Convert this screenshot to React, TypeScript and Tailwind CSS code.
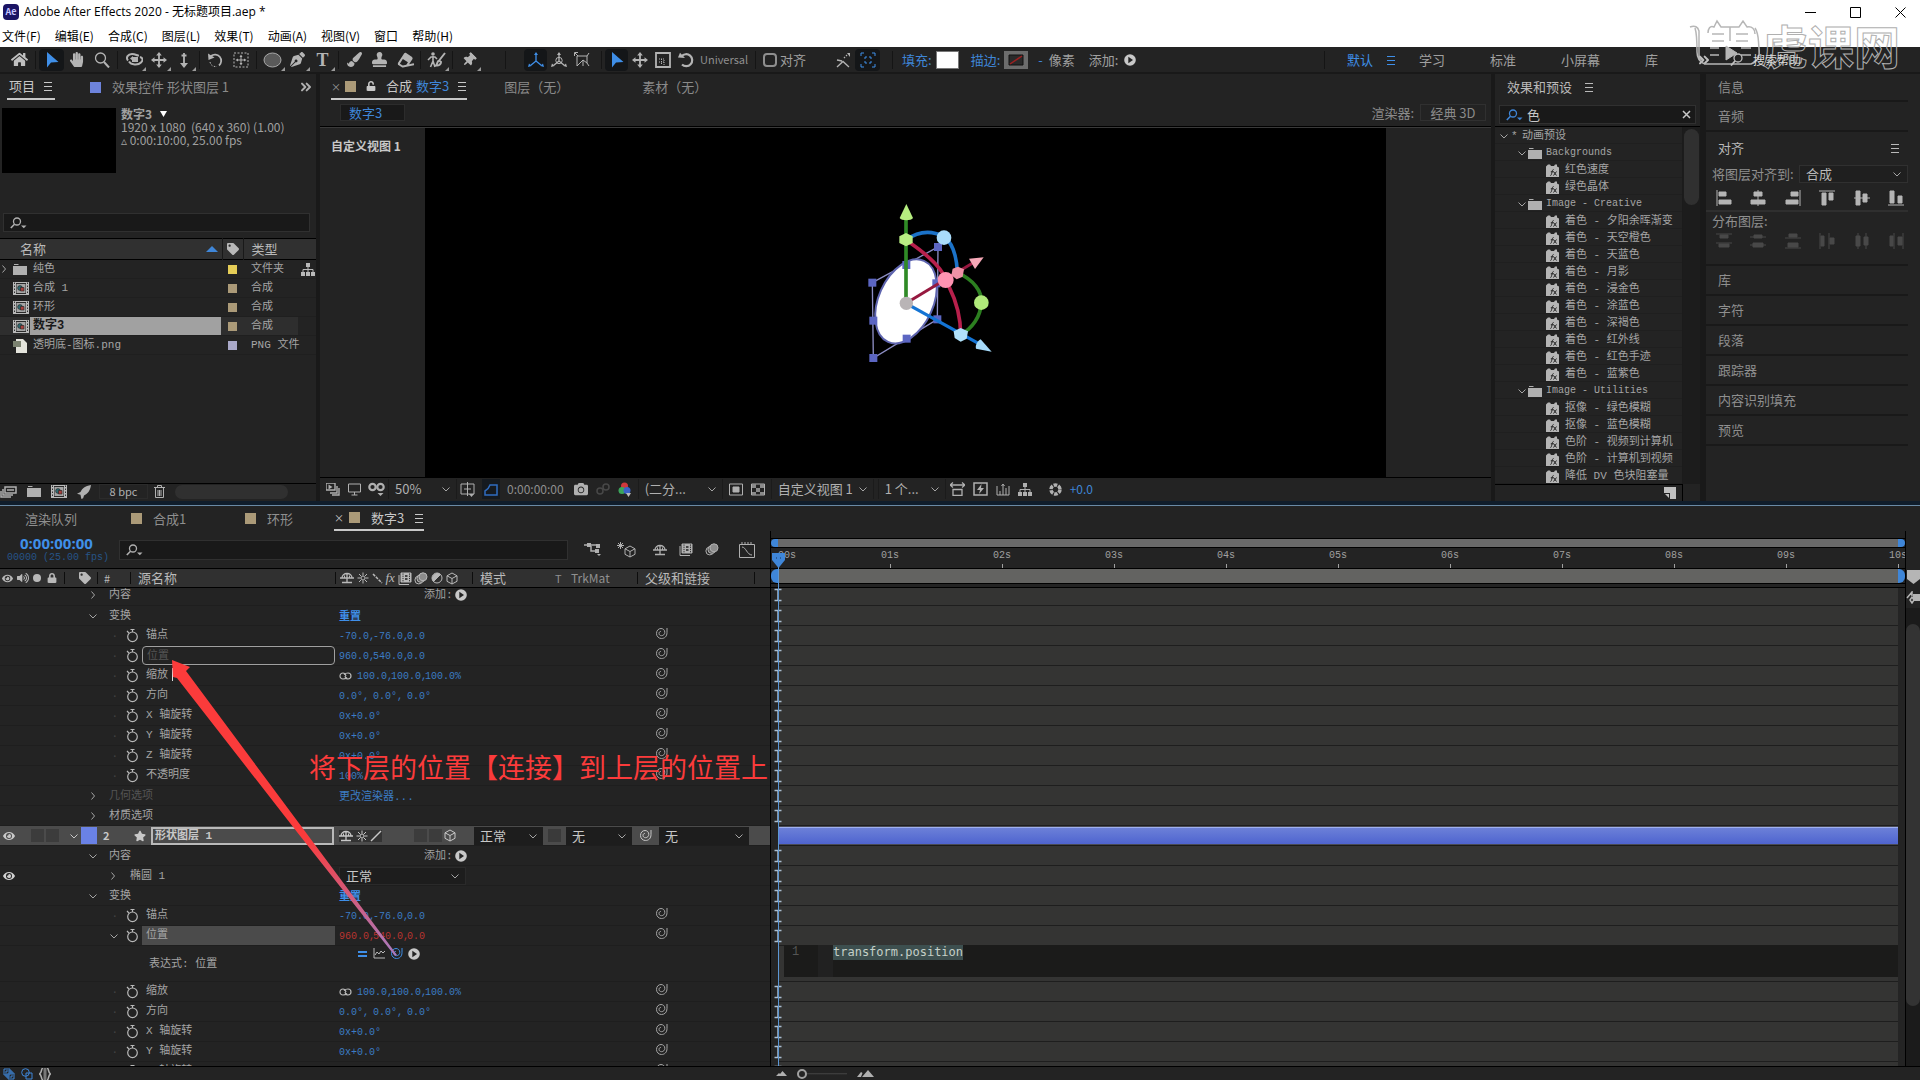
import type { ReactNode } from "react";
import { ChevronsRight } from "lucide-react";
import {
  FaCamera,
  FaEraser,
  FaEye,
  FaHandPaper,
  FaHome,
  FaLock,
  FaPaintBrush,
  FaPenNib,
  FaStamp,
  FaStar,
  FaTag,
  FaThumbtack,
  FaUnlock,
  FaVolumeUp,
} from "react-icons/fa";

const mono =
  "[font-family:'Liberation_Mono','Noto_Sans_CJK_SC',monospace]";

type SvgProps = {
  w?: number;
  h?: number;
  box?: string;
  className?: string;
  children: ReactNode;
};

const Svg = ({ w = 16, h = 16, box = "0 0 16 16", className, children }: SvgProps) => (
  <svg
    width={w}
    height={h}
    viewBox={box}
    fill="none"
    stroke="currentColor"
    className={`shrink-0 ${className ?? ""}`}
    aria-hidden="true"
  >
    {children}
  </svg>
);

/* ---------- icons ---------- */

const MenuLines = ({ className }: { className?: string }) => (
  <Svg w={10} h={10} box="0 0 10 10" className={className}>
    <path d="M1 1.500h8M1 5.500h8M1 9.500h8" />
  </Svg>
);

const ChevronDown = ({ className }: { className?: string }) => (
  <Svg w={8} h={8} box="0 0 8 8" className={className}>
    <path d="M.5 2.500 4 6l3.500-3.500" />
  </Svg>
);

const ChevronRight = () => (
  <Svg w={8} h={8} box="0 0 8 8">
    <path d="M2.500.5 5.500 4l-3 3.500" />
  </Svg>
);

const SearchIcon = ({ className }: { className?: string }) => (
  <Svg w={17} h={12} box="0 0 17 12" className={className}>
    <circle cx="7" cy="4.500" r="3.500" strokeWidth="1.300" />
    <path d="M4.500 7.200.8 11" strokeWidth="1.600" />
    <path d="M11 8.500h5.500l-2.700 2.800z" fill="currentColor" stroke="none" />
  </Svg>
);

const Cursor = () => (
  <Svg>
    <path d="M3 0v15.500l4-5L14.500 10z" fill="currentColor" stroke="none" />
  </Svg>
);

const Move = () => (
  <Svg>
    <path d="M8 2.500v11M2.500 8h11" strokeWidth="1.800" />
    <path d="M8 0l2.800 3.500H5.200zM8 16l2.800-3.500H5.200zM0 8l3.500-2.800v5.600zM16 8l-3.500-2.800v5.600z" fill="currentColor" stroke="none" />
  </Svg>
);

const RotateIcon = () => (
  <Svg>
    <path d="M3.500 4.500A6 6 0 1 1 4 12.500" strokeWidth="2.200" />
    <path d="M0 5.500 7 6 2 .8z" fill="currentColor" stroke="none" />
  </Svg>
);

const CompIcon = () => (
  <Svg w={16} h={13} box="0 0 16 13">
    <path d="M0 0h16v13H0z" fill="#b9b9b9" stroke="none" />
    <path d="M3 1h10v11H3z" fill="#2a2a2a" stroke="none" />
    <path d="M3.500 2h9v9h-9z" fill="#a5a5a5" stroke="none" />
    <circle cx="7" cy="6" r="2.400" fill="#2f6a72" stroke="#222" strokeWidth=".6" />
    <path d="M7.500 5.500h3.500v3.500H7.500z" fill="#a8403c" stroke="#222" strokeWidth=".6" />
    <path d="M1.500.5v12M14.500.5v12" stroke="#333" strokeDasharray="1.500 1.500" />
  </Svg>
);

const FolderIcon = () => (
  <Svg w={14} h={11} box="0 0 14 11" className="text-[#b0b0b0]">
    <path d="M0 2h14v9H0zM1 0h4l1 1H1z" fill="currentColor" stroke="none" />
  </Svg>
);

const PresetIcon = () => (
  <Svg w={13} h={13} box="0 0 13 13" className="text-[#b5b5b5]">
    <path d="M0 2.500 2 .5h2l1 1.500h3L9 .5h2v2l2 1V13H0z" fill="currentColor" stroke="none" />
    <path d="M4.500 11.500c1.500 0 1.200-6 3-6M4.800 7.800h2.700M7.500 7.500l3 4M10.500 7.500l-3 4" stroke="#222" />
  </Svg>
);

const PlayCircle = () => (
  <Svg w={12} h={12} box="0 0 12 12">
    <circle cx="6" cy="6" r="5.800" fill="#c8c8c8" stroke="none" />
    <path d="M4.300 2.800 9 6 4.300 9.200z" fill="#232323" stroke="none" />
  </Svg>
);

const Whip = ({ className }: { className?: string }) => (
  <Svg w={13} h={13} box="0 0 13 13" className={className}>
    <path d="M12 1v4.500c0 4-2.500 6-5.500 6a5 5 0 0 1-5-5C1.500 3.500 3.500 1.500 6 1.500c2.300 0 3.800 1.700 3.800 3.800 0 2-1.500 3.400-3.300 3.400-1.500 0-2.500-1-2.500-2.300 0-1.200.9-2 2-2" />
  </Svg>
);

const Stopwatch = () => (
  <Svg w={13} h={15} box="0 0 13 15" className="text-[#b9b9b9]">
    <circle cx="6.500" cy="8.800" r="4.800" strokeWidth="1.200" />
    <path d="M4.500 1.500h4M6.500 1.500v2.500M2.800 5 1 2.800" strokeWidth="1.200" />
  </Svg>
);

const ShyIcon = () => (
  <Svg w={14} h={12} box="0 0 14 12">
    <path d="M2 6a5 4.500 0 0 1 10 0M0 6h14M7 1.500V11M2 10.500h10" strokeWidth="1.300" />
    <path d="M4.500 3.500v2.500M9.500 3.500v2.500" />
  </Svg>
);

const SunIcon = () => (
  <Svg w={12} h={12} box="0 0 12 12">
    <circle cx="6" cy="6" r="2" />
    <path d="M6 .5v3M6 8.500v3M.5 6h3M8.500 6h3M2 2l2 2M8 8l2 2M10 2 8 4M4 8l-2 2" />
  </Svg>
);

const FilmIcon = () => (
  <Svg w={14} h={13} box="0 0 14 13">
    <path d="M3 1h10v9H3z" fill="currentColor" />
    <path d="M1 3v9.500h10" />
    <path d="M5 1.500v8M11.500 1.500v8" stroke="#2b2b2b" strokeDasharray="1.200 1" />
    <path d="M7 3h2.500v2H7zM7 6h2.500v2H7z" fill="#444" stroke="none" />
  </Svg>
);

const BlurIcon = () => (
  <Svg w={14} h={13} box="0 0 14 13">
    <circle cx="4.800" cy="8" r="3.900" />
    <circle cx="6.800" cy="6.500" r="3.900" fill="#666" />
    <circle cx="9" cy="4.800" r="4" fill="#8c8c8c" />
  </Svg>
);

const AdjustIcon = () => (
  <Svg w={12} h={12} box="0 0 12 12">
    <circle cx="6" cy="6" r="5" />
    <path d="M2.500 9.500 9.500 2.500A5 5 0 0 0 2.500 9.500z" fill="currentColor" />
  </Svg>
);

const CubeIcon = () => (
  <Svg w={12} h={13} box="0 0 12 13">
    <path d="M6 1l5 2.800v5.500L6 12 1 9.300V3.800zM1 3.800 6 6.500l5-2.700M6 6.500V12" />
  </Svg>
);

const Sitemap = () => (
  <Svg w={14} h={13} box="0 0 14 13">
    <path d="M5 0h4v4H5zM0 9h4v4H0zM5 9h4v4H5zM10 9h4v4h-4z" fill="currentColor" stroke="none" />
    <path d="M7 4v5M2 9V6.500h10V9" />
  </Svg>
);

const LinkIcon = () => (
  <Svg w={13} h={8} box="0 0 13 8" className="text-[#b9b9b9]">
    <path d="M8 5.500c-1 1-2 1.500-4 1.500-1.800 0-3-1.200-3-3s1.200-3 3-3 2.500 1 3 3M5 2.500C6 1.500 7 1 9 1c1.800 0 3 1.200 3 3s-1.200 3-3 3-2.500-1-3-3" strokeWidth="1.200" />
  </Svg>
);

/* ---------- small parts ---------- */

const Sep = () => <span className="mx-[3px] h-[18px] w-px shrink-0 bg-[#151515]" />;

type ToolProps = { label: string; active?: boolean; narrow?: boolean; corner?: boolean; children: ReactNode };

const Tool = ({ label, active, narrow, corner, children }: ToolProps) => (
  <button
    type="button"
    aria-label={label}
    className={`relative flex h-[22px] shrink-0 items-center justify-center ${narrow ? "w-[23px]" : "w-[25px]"} ${
      active ? "rounded-sm bg-[#141618] text-[#3f8fe8]" : "text-[#b4b4b4]"
    }`}
  >
    {children}
    {corner && (
      <span className="absolute right-0 bottom-0 border-b-4 border-l-4 border-b-[#9a9a9a] border-l-transparent" />
    )}
  </button>
);

type DropProps = { label: string; value: string; className: string };

const Drop = ({ label, value, className }: DropProps) => (
  <div className={`relative shrink-0 ${className}`}>
    <select
      aria-label={label}
      className="block h-full w-full appearance-none bg-transparent pl-1.5 text-[13px] leading-4 outline-none"
    >
      <option>{value}</option>
    </select>
    <ChevronDown className="pointer-events-none absolute top-1/2 right-1.5 -translate-y-1/2 text-[#a5a5a5]" />
  </div>
);

const Swatch = ({ className }: { className: string }) => (
  <span className={`inline-block size-[11px] shrink-0 ${className}`} />
);

/* ---------- window chrome ---------- */

const menus = ["文件(F)", "编辑(E)", "合成(C)", "图层(L)", "效果(T)", "动画(A)", "视图(V)", "窗口", "帮助(H)"];

const TitleBar = () => (
  <header className="relative bg-white text-black">
    <div className="flex h-6 items-center pl-[3px] text-[12px]">
      <span className="mr-[5px] flex h-4 w-4 items-center justify-center rounded-sm bg-[#1b1464] text-[9px] font-bold text-[#c5c5ff]">
        Ae
      </span>
      <h1 className="[font-family:'Open_Sans','Noto_Sans_CJK_SC',sans-serif]">
        Adobe After Effects 2020 - 无标题项目.aep *
      </h1>
      <div className="ml-auto flex items-center gap-[34px] pr-[14px]">
        <button type="button" aria-label="最小化">
          <Svg w={11} h={11} box="0 0 11 11"><path d="M0 5.500h11" /></Svg>
        </button>
        <button type="button" aria-label="最大化">
          <Svg w={11} h={11} box="0 0 11 11"><path d="M.5.5h10v10H.5z" /></Svg>
        </button>
        <button type="button" aria-label="关闭">
          <Svg w={11} h={11} box="0 0 11 11"><path d="m.5.5 10 10M10.500.5l-10 10" /></Svg>
        </button>
      </div>
    </div>
    <nav className="flex h-[23px] items-center gap-[14px] pl-0.5 text-[12px]">
      {menus.map((m) => (
        <button type="button" key={m}>{m}</button>
      ))}
    </nav>
    <Watermark />
  </header>
);

const Watermark = () => (
  <div className="pointer-events-none absolute top-[19px] right-[20px] z-20 flex h-[50px] items-center">
    <Svg w={74} h={50} box="0 0 74 50" className="text-[#b7b7b7]">
      <path d="M2 8c5-2 8 0 9 4v24c0 3 2 5 5 5M7 9c2 6 2 14 2 24 0 6 2 10 8 12h46c6-2 9-8 8-16-1-9 0-14-4-20" strokeWidth="1.500" />
      <path d="M20 14c0-4 2-8 6-6l3-6 4 6h18l4-6 4 6c5-1 8 2 8 7M24 15h12M48 15h12M24 22h12M48 22h12M22 29h9M53 29h10M22 36h9M53 36h10M42 8v14" strokeWidth="1.500" />
      <path d="m38 27 11 7-11 7z" fill="currentColor" />
    </Svg>
    <span className="text-[46px] leading-[50px] font-bold text-transparent [-webkit-text-stroke:1px_#b0b0b0]">
      虎课网
    </span>
  </div>
);

const Toolbar = () => (
  <div className="flex h-[27px] items-center border-b-2 border-[#191919] bg-[#232323] text-[13px] text-[#a0a0a0]">
    <div className="flex w-8 shrink-0 items-center justify-center pl-1.5 text-[#c0c0c0]">
      <FaHome size={17} />
    </div>
    <Sep />
    <Tool label="选取工具" active><Cursor /></Tool>
    <Tool label="手形工具"><FaHandPaper size={15} /></Tool>
    <Tool label="缩放工具">
      <Svg><circle cx="6.500" cy="6" r="5" strokeWidth="1.300" /><path d="m10 10 5 5.500" strokeWidth="2" /></Svg>
    </Tool>
    <Sep />
    <Tool label="统一摄像机工具" corner>
      <Svg w={18} box="0 0 18 16">
        <path d="M3 8.500C.5 5.500 3 2 7 2s5 2 7 1.500M4 9.500c2 3.500 9 4 12 1s1-5-1-5.500" strokeWidth="2" />
        <path d="M7 5h6v5H7zM5 6.500 8 4v5z" fill="currentColor" stroke="none" />
      </Svg>
    </Tool>
    <Tool label="跟踪 XY 摄像机工具" corner><Move /></Tool>
    <Tool label="跟踪 Z 摄像机工具" corner>
      <Svg><path d="M8 1v11M5.500 3.500h5" strokeWidth="1.800" /><path d="M8 16l4-5H4z" fill="currentColor" stroke="none" /></Svg>
    </Tool>
    <Sep />
    <Tool label="旋转工具">
      <Svg>
        <path d="M3 4a6 6 0 0 1 8 9.500" strokeWidth="1.800" />
        <path d="M0 1.500 6.500 5.500.5 8z" fill="currentColor" stroke="none" />
        <path d="M2 10c.5 3 3 5 7 4.500" strokeDasharray="1.500 1.500" />
      </Svg>
    </Tool>
    <Tool label="向后平移工具">
      <Svg>
        <path d="M1 1h14v14H1z" strokeDasharray="2 1.500" />
        <path d="M8 4v8M4 8h8" />
        <path d="M8 2.500 9.500 5h-3zM8 13.500 9.500 11h-3zM2.500 8 5 6.500v3zM13.500 8 11 6.500v3z" fill="currentColor" stroke="none" />
      </Svg>
    </Tool>
    <Sep />
    <Tool label="椭圆工具" corner>
      <Svg w={19} box="0 0 19 16"><ellipse cx="9.500" cy="8" rx="8.500" ry="7" fill="#5a5a5a" stroke="#a8a8a8" /></Svg>
    </Tool>
    <Tool label="钢笔工具" corner><FaPenNib size={15} /></Tool>
    <Tool label="横排文字工具" corner>
      <span className="text-[18px] leading-4 font-bold [font-family:'Liberation_Serif',serif]">T</span>
    </Tool>
    <Sep />
    <Tool label="画笔工具"><FaPaintBrush size={15} /></Tool>
    <Tool label="仿制图章工具"><FaStamp size={15} /></Tool>
    <Tool label="橡皮擦工具"><FaEraser size={16} className="-rotate-12" /></Tool>
    <Sep />
    <Tool label="Roto 笔刷工具" corner>
      <Svg w={19} box="0 0 19 16">
        <circle cx="6" cy="2" r="1.800" fill="currentColor" stroke="none" />
        <path d="M6 4v5l-2.500 6M6 9l2 6M1 8l3-3h4l2 2" strokeWidth="1.600" />
        <path d="M18 1 12.500 8M12 8.500c-2 .5-1 3-3 5 3 .5 5-1.500 5-3.500z" strokeWidth="2" />
      </Svg>
    </Tool>
    <Sep />
    <Tool label="人偶位置控点工具" corner><FaThumbtack size={14} className="rotate-45" /></Tool>
    <span className="w-[21px]" />
    <Sep />
    <span className="w-[15px]" />
    <Tool label="本地轴模式" active narrow>
      <Svg><path d="M8 9V1.500M8 9l-5.500 4.500M8 9l5.500 4.500" strokeWidth="1.300" /><path d="M8 0l2 3H6zM0 15l1-3.500L3.500 14zM16 15l-1-3.500L12.500 14z" fill="currentColor" stroke="none" /></Svg>
    </Tool>
    <Tool label="世界轴模式" narrow>
      <Svg><circle cx="8" cy="8.500" r="3.200" /><path d="M8 9V1.500M8 9l-5.500 4.500M8 9l5.500 4.500" strokeWidth="1.300" /><path d="M8 0l2 3H6zM0 15l1-3.500L3.500 14zM16 15l-1-3.500L12.500 14z" fill="currentColor" stroke="none" /></Svg>
    </Tool>
    <Tool label="视图轴模式" narrow>
      <Svg><path d="M3 4h10v7L9 8 3 14zM1 1l3 3M4 .5H.5V4M15 1l-2 3M13 11l2 3M9 8v6" /></Svg>
    </Tool>
    <span className="w-[5px]" />
    <Sep />
    <Tool label="通用" active narrow><Cursor /></Tool>
    <Tool label="位置" narrow><Move /></Tool>
    <Tool label="缩放" narrow>
      <Svg><path d="M1 1h14v14H1z" strokeWidth="1.800" /><path d="M4 7h5v6M4 10h5M6.500 7v6" strokeDasharray="1 1" /></Svg>
    </Tool>
    <Tool label="旋转" narrow><RotateIcon /></Tool>
    <span className="ml-[3px] w-[52px] text-[11px] text-[#8f8f8f]">Universal</span>
    <Sep />
    <label className="ml-1 flex items-center gap-[3px]">
      <input type="checkbox" className="size-[14px] appearance-none rounded-sm border-2 border-[#8f8f8f]" />
      对齐
    </label>
    <span className="w-[24px]" />
    <Tool label="对齐边缘">
      <Svg><path d="M2 15l6-5.500L14 15M2 8l5 1M9 6l1-1M11 4l1-1" strokeWidth="1.300" /><path d="M12 1h3v4z" fill="currentColor" stroke="none" /></Svg>
    </Tool>
    <Tool label="对齐特性" active>
      <Svg><path d="M1 4V1h3M12 1h3v3M15 12v3h-3M4 15H1v-3M5 7V5h2M9 5h2v2M11 9v2H9M7 11H5V9" /></Svg>
    </Tool>
    <span className="w-[9px]" />
    <Sep />
    <button type="button" className="ml-1.5 text-[#3f86d8]">填充:</button>
    <span className="ml-1 h-[18px] w-[23px] border border-[#777] bg-white" />
    <button type="button" className="ml-3 text-[#3f86d8]">描边:</button>
    <Svg w={24} h={18} box="0 0 24 18" className="ml-1">
      <path d="M0 0h24v18H0z" fill="#6c6c6c" stroke="none" />
      <path d="M5 4h14v10H5z" fill="#2a2a2a" stroke="#111" />
      <path d="M6 13 18 5" stroke="#a02020" strokeWidth="1.500" />
    </Svg>
    <span className="ml-2.5 text-[#3f86d8]">-</span>
    <span className="ml-1.5">像素</span>
    <span className="mr-1.5 ml-3.5">添加:</span>
    <PlayCircle />
    <div className="ml-auto flex h-full items-center">
      <Sep />
      <button type="button" className="ml-[19px] text-[#3f8fe8]">默认</button>
      <MenuLines className="ml-[13px] text-[#3f8fe8]" />
      <button type="button" className="ml-[23px]">学习</button>
      <button type="button" className="ml-[45px]">标准</button>
      <button type="button" className="ml-[45px]">小屏幕</button>
      <button type="button" className="ml-[45px]">库</button>
      <ChevronsRight size={16} strokeWidth={3} className="ml-[38px] text-[#c0c0c0]" />
      <label className="relative z-30 ml-2.5 flex h-[21px] w-[198px] items-center pl-2">
        <Svg w={13} h={13} box="0 0 13 13" className="text-[#c0c0c0]">
          <circle cx="8" cy="5" r="4" strokeWidth="1.300" /><path d="M5 8l-4 4.500" strokeWidth="1.800" />
        </Svg>
        <input
          aria-label="搜索帮助"
          placeholder="搜索帮助"
          className="ml-2.5 w-24 bg-transparent text-[12px] outline-none placeholder:text-[#d8d8d8]"
        />
      </label>
    </div>
  </div>
);

/* ---------- project panel ---------- */

const files = [
  { name: "纯色", type: "文件夹", swatch: "bg-[#e5cd57]", kind: "folder" },
  { name: "合成 1", type: "合成", swatch: "bg-[#ab9a78]", kind: "comp" },
  { name: "环形", type: "合成", swatch: "bg-[#ab9a78]", kind: "comp" },
  { name: "数字3", type: "合成", swatch: "bg-[#ab9a78]", kind: "comp", selected: true },
  { name: "透明底-图标.png", type: "PNG 文件", swatch: "bg-[#aaa9c9]", kind: "png" },
];

const ProjectPanel = () => (
  <section className="flex w-[316px] shrink-0 flex-col overflow-hidden bg-[#232323]">
    <div className="flex h-[26px] items-stretch pl-[7px] text-[13px]">
      <button type="button" className="flex items-center gap-2 border-b-2 border-[#c8c8c8] px-0.5 text-[#c8c8c8]">
        项目 <MenuLines />
      </button>
      <button type="button" className="ml-[35px] flex items-center gap-[11px] text-[#8a8a8a]">
        <Swatch className="bg-[#6d83dc]" />
        效果控件 形状图层 1
      </button>
      <ChevronsRight size={16} strokeWidth={3} className="mr-0.5 ml-auto self-center text-[#b0b0b0]" />
    </div>
    <div className="flex h-[113px] gap-[5px] pt-2 pl-0.5">
      <div className="h-[65px] w-[114px] bg-black" />
      <div className="text-[12px] leading-[13px] text-[#a0a0a0]">
        <p className="flex items-center gap-2 leading-3 font-bold">
          数字3
          <Svg w={7} h={6} box="0 0 7 6"><path d="M0 0h7L3.500 6z" fill="#fff" stroke="none" /></Svg>
        </p>
        <p>1920 x 1080&nbsp; (640 x 360) (1.00)</p>
        <p>▵ 0:00:10:00, 25.00 fps</p>
      </div>
    </div>
    <label className="mx-[3px] flex h-[19px] w-[307px] items-center border border-[#303030] bg-[#191919] pl-1.5 text-[#b0b0b0]">
      <SearchIcon />
      <input aria-label="搜索项目" className="w-full bg-transparent pl-1 text-[12px] outline-none" />
    </label>
    <table className="mt-[6px] w-full table-fixed border-collapse text-left">
      <colgroup>
        <col className="w-[222px]" />
        <col className="w-[21px]" />
        <col className="w-[55px]" />
        <col className="w-[18px]" />
      </colgroup>
      <thead>
        <tr className="h-[21px] border-y border-black bg-[#303030] text-[13px] text-[#b9b9b9]">
          <th className="p-0 font-normal">
            <span className="flex items-center justify-between pr-1 pl-[20px] leading-4">
              名称
              <Svg w={12} h={6} box="0 0 12 6"><path d="M0 6 6 0l6 6z" fill="#3f86d8" stroke="none" /></Svg>
            </span>
          </th>
          <th className="border-x border-[#191919] p-0 pl-1" aria-label="标签"><FaTag size={12} /></th>
          <th className="p-0 pl-2 leading-4 font-normal" colSpan={2}>类型</th>
        </tr>
      </thead>
      <tbody className={`text-[11px] leading-[17px] text-[#a5a5a5] ${mono}`}>
        {files.map((f) => (
          <tr key={f.name} className={`h-[19px] border-b border-[#1f1f1f] ${f.selected ? "bg-[#2e2e2e]" : ""}`}>
            <td className="p-0">
              <span className="flex items-center">
                <span className="flex w-[13px] justify-start">{f.kind === "folder" && <ChevronRight />}</span>
                <span className="flex w-[17px] shrink-0">
                  {f.kind === "folder" && <FolderIcon />}
                  {f.kind === "comp" && <CompIcon />}
                  {f.kind === "png" && (
                    <Svg w={14} h={15} box="0 0 14 15">
                      <path d="M3 1h7l4 4v10H3z" fill="#e4e4dc" stroke="none" />
                      <path d="M0 3h8v6H0z" fill="#7b8270" stroke="none" />
                    </Svg>
                  )}
                </span>
                <span className={`mr-px flex-1 pt-px pl-[3px] ${f.selected ? "bg-[#a1a1a1] text-[12px] font-bold text-[#1a1a1a]" : ""}`}>
                  {f.name}
                </span>
              </span>
            </td>
            <td className="p-0 pl-1.5"><span className={`block size-[9px] ${f.swatch}`} /></td>
            <td className="p-0 pt-px pl-2 whitespace-nowrap">{f.type}</td>
            <td className="bg-[#232323] p-0 pl-[3px] text-[#b9b9b9]">{f.kind === "folder" && <Sitemap />}</td>
          </tr>
        ))}
      </tbody>
    </table>
    <div className="mt-auto flex h-[18px] items-center border-t border-black pb-0.5 text-[#b0b0b0]">
      <Svg w={17} h={12} box="0 0 17 12"><path d="M5 1h11v6H5zM3 3v6h10M1 5v6h10M7 4h7" strokeWidth="1.500" /></Svg>
      <span className="ml-2.5"><FolderIcon /></span>
      <span className="ml-2.5"><CompIcon /></span>
      <Svg w={14} h={14} className="ml-2.5"><path d="M16 0C9 1 6 4 4 8L0 10l4 1 1 5 2-1 1-3c4-2 7-5 8-12z" fill="currentColor" stroke="none" /></Svg>
      <button type="button" className="ml-2 h-[15px] w-[49px] border border-[#2b2b2b] text-[11px] leading-[13px]">8 bpc</button>
      <Svg w={11} h={13} box="0 0 11 13" className="ml-1.5"><path d="M0 2.500h11M3.500 2V.5h4V2M1.500 3v9.500h8V3M4 5v6M5.500 5v6M7 5v6" /></Svg>
      <span className="ml-2.5 h-3.5 w-[113px] rounded-full bg-[#303030]" />
    </div>
  </section>
);

/* ---------- composition viewer ---------- */

const handles = [
  [155, 308], [352, 201], [257, 255], [158, 422], [258, 476], [158, 534], [350, 418], [347, 310],
];

const Gizmo = () => (
  <Svg w={240} h={200} box="-104 69 720 600">
    <path d="M155 308 352 201 350 418 158 534z" stroke="#8d8ec4" strokeWidth="4" />
    <ellipse cx="256" cy="364" rx="82" ry="133" transform="rotate(24 256 364)" fill="#fff" stroke="#5e64ae" strokeWidth="6" />
    {handles.map(([x, y]) => (
      <rect key={`${x}-${y}`} x={x - 12} y={y - 12} width="24" height="24" fill="#5c66c2" stroke="none" />
    ))}
    <path d="M256 180C295 152 335 152 370 170 398 190 408 230 410 278" stroke="#1b72c8" strokeWidth="11" />
    <path d="M410 278C460 300 485 335 482 368 480 410 455 445 420 464" stroke="#2c7f20" strokeWidth="11" />
    <path d="M256 180C330 230 370 270 385 320 405 360 420 410 420 464" stroke="#b8204c" strokeWidth="11" />
    <path d="M256 370V110" stroke="#2f8a26" strokeWidth="11" />
    <path d="M256 370 455 250" stroke="#96183f" strokeWidth="9" />
    <path d="M256 370 480 494" stroke="#1474d4" strokeWidth="10" />
    <g stroke="none">
      <path d="m257 72-20 42c5 9 35 9 40 0z" fill="#b6ee80" />
      <path d="m489 232-44 4 18 31z" fill="#f7a9b8" />
      <path d="m513 515-33-37c-10 6-17 18-14 28z" fill="#a6dbfb" />
      <path d="m256 159 20 10v20l-20 10-20-10v-20z" fill="#b9ee84" />
      <path d="m412 260 18 8-4 22-18 8-16-12 4-20z" fill="#ee92a6" />
      <path d="m420 444 22 10-4 22-18 9-18-11-3-20z" fill="#b0e2fb" />
      <circle cx="370" cy="173" r="22" fill="#a9dcfa" />
      <circle cx="482" cy="368" r="22" fill="#b0ea7a" />
      <circle cx="375" cy="300" r="24" fill="#ff93b2" />
      <circle cx="257" cy="370" r="20" fill="#b9b4b6" />
    </g>
  </Svg>
);

const Viewer = () => (
  <section className="flex min-w-0 flex-1 flex-col bg-[#232323]">
    <div className="flex h-[26px] items-stretch pl-[11px] text-[13px] text-[#8a8a8a]">
      <button type="button" className="flex items-center border-b-2 border-[#c8c8c8] text-left text-[#c8c8c8]">
        <span className="w-[14px] text-[10px] text-[#999]">×</span>
        <Swatch className="bg-[#ab9a78]" />
        <FaUnlock size={10} className="ml-2.5" />
        <span className="ml-2.5">合成</span>
        <span className="ml-1 text-[#3f86d8]">数字3</span>
        <MenuLines className="ml-2" />
      </button>
      <button type="button" className="ml-[37px]">图层（无）</button>
      <button type="button" className="ml-[73px]">素材（无）</button>
    </div>
    <div className="flex h-[27px] shrink-0 items-center border-b border-black pr-[5px] pb-px pl-5 text-[13px] text-[#8a8a8a]">
      <button type="button" className="h-[17px] w-[65px] border border-[#2c2c2c] bg-[#191919] pl-2 text-left leading-[15px] text-[#3f86d8]">
        数字3
      </button>
      <span className="ml-auto">渲染器:</span>
      <button type="button" className="ml-1.5 h-[17px] w-[66px] border border-[#303030] leading-[15px]">经典 3D</button>
    </div>
    <div className="relative flex flex-1 items-stretch justify-center border-t border-[#3a3a3a]">
      <span className="absolute top-[9px] left-[11px] text-[12px] font-bold text-[#c8c8c8]">自定义视图 1</span>
      <div className="flex w-[82%] items-center justify-center bg-black">
        <Gizmo />
      </div>
    </div>
    <div className="flex h-6 shrink-0 items-center border-t border-black pb-px pl-1.5 text-[#b0b0b0]">
      <Svg w={14} h={13} box="0 0 14 13"><path d="M0 0h9v7H0zM11 3v7H4M13 5v7H6" fill="none" strokeWidth="1.400" /><path d="M2.500 1.500v5l4-2.500z" fill="currentColor" stroke="none" /></Svg>
      <Svg w={13} h={13} box="0 0 13 13" className="ml-2"><path d="M.5 1h12v8H.5zM6.500 9v3M3.500 12h6" /></Svg>
      <Svg w={17} h={14} box="0 0 17 14" className="ml-[7px]"><circle cx="4.500" cy="5" r="3.200" strokeWidth="2.200" /><circle cx="12.500" cy="5" r="3.200" strokeWidth="2.200" /><path d="M9.500 11h6l-3 3z" fill="currentColor" stroke="none" /></Svg>
      <Drop label="放大率" value="50%" className="ml-[3px] h-5 w-[69px] border-x border-[#1b1b1b]" />
      <Svg w={15} h={15} box="0 0 15 15" className="ml-[3px]"><path d="M1 2h13v10H1zM7.500 0v14M4 7h7" /><path d="M9 12h5l-2.500 3z" fill="currentColor" stroke="none" /></Svg>
      <span className="ml-[7px] flex h-5 w-[18px] items-center justify-center bg-[#151a20] text-[#2f6cc0]">
        <Svg w={14} h={13} box="0 0 14 13"><path d="M1 12V8c2-1 4-3 5-6h7v10z" strokeWidth="1.500" /></Svg>
      </span>
      <span className="ml-[7px] text-[12px] leading-4 text-[#8f8f8f]">0:00:00:00</span>
      <FaCamera size={14} className="ml-2.5" />
      <Svg w={14} h={12} box="0 0 14 12" className="ml-2 text-[#484848]"><circle cx="4" cy="8" r="3" strokeWidth="1.500" /><circle cx="10" cy="4" r="3" strokeWidth="1.500" /></Svg>
      <Svg w={14} h={15} box="0 0 14 15" className="ml-2"><g stroke="none"><circle cx="6.500" cy="4" r="3.500" fill="#d0383c" /><circle cx="4" cy="8.500" r="3.500" fill="#3ba55c" /><circle cx="9" cy="8.500" r="3.500" fill="#3c62c8" /><path d="M8 11h5l-2.500 4z" fill="#bbb" /></g></Svg>
      <Drop label="分辨率" value="(二分..." className="ml-1.5 h-5 w-[85px] border-x border-[#1b1b1b]" />
      <Svg w={14} h={13} box="0 0 14 13" className="ml-1.5"><path d="M.5 1h13v11H.5z" /><path d="M4 4h6v5H4z" fill="currentColor" /></Svg>
      <Svg w={14} h={13} box="0 0 14 13" className="ml-2"><path d="M.5 1h13v11H.5z" /><path d="M1 1h4v4H1zM9 1h4v4H9zM5 5h4v4H5zM1 9h4v3H1zM9 9h4v3H9z" fill="#8a8a8a" stroke="none" /></Svg>
      <Drop label="3D 视图" value="自定义视图 1" className="ml-1.5 h-5 w-[103px] border-x border-[#1b1b1b]" />
      <Drop label="视图布局" value="1 个..." className="ml-1 h-5 w-[68px] border-x border-[#1b1b1b]" />
      <Svg w={15} h={14} box="0 0 15 14" className="ml-1"><path d="M0 3h15M3 .5 0 3l3 2.500M12 .5 15 3l-3 2.500M3 7.500h9v6H3z" strokeWidth="1.300" /></Svg>
      <Svg w={15} h={14} box="0 0 15 14" className="ml-2"><path d="M1 1h13v12H1z" strokeWidth="1.500" /><path d="M8.500 2 4 8h3l-1 4 5-6H8z" fill="currentColor" stroke="none" /></Svg>
      <Svg w={14} h={13} box="0 0 14 13" className="ml-2"><path d="M1 3v9h12V3M4 8v4M7 2v10M10 5v7M5.500 3 7 1l1.500 2" /></Svg>
      <span className="ml-2"><Sitemap /></span>
      <Svg w={13} h={13} box="0 0 13 13" className="ml-[17px]"><circle cx="6.500" cy="6.500" r="4.500" strokeWidth="3.500" strokeDasharray="3.600 1.100" /></Svg>
      <span className="ml-2 text-[12px] text-[#3f86d8]">+0.0</span>
    </div>
  </section>
);

/* ---------- effects & presets ---------- */

const presets = [
  { name: "动画预设", level: 0 },
  { name: "Backgrounds", level: 1 },
  { name: "红色速度", level: 2 },
  { name: "绿色晶体", level: 2 },
  { name: "Image - Creative", level: 1 },
  { name: "着色 - 夕阳余晖渐变", level: 2 },
  { name: "着色 - 天空橙色", level: 2 },
  { name: "着色 - 天蓝色", level: 2 },
  { name: "着色 - 月影", level: 2 },
  { name: "着色 - 浸金色", level: 2 },
  { name: "着色 - 涂蓝色", level: 2 },
  { name: "着色 - 深褐色", level: 2 },
  { name: "着色 - 红外线", level: 2 },
  { name: "着色 - 红色手迹", level: 2 },
  { name: "着色 - 蓝紫色", level: 2 },
  { name: "Image - Utilities", level: 1 },
  { name: "抠像 - 绿色模糊", level: 2 },
  { name: "抠像 - 蓝色模糊", level: 2 },
  { name: "色阶 - 视频到计算机", level: 2 },
  { name: "色阶 - 计算机到视频", level: 2 },
  { name: "降低 DV 色块阻塞量", level: 2 },
];

const EffectsPanel = () => (
  <section className="mr-0.5 flex w-[205px] shrink-0 flex-col bg-[#232323]">
    <div className="flex h-[26px] items-center gap-3 pl-3 text-[13px] text-[#b9b9b9]">
      效果和预设 <MenuLines />
    </div>
    <div className="h-[27px] border-b border-black px-1 pt-[5px]">
      <label className="flex h-[19px] items-center border border-[#303030] bg-[#191919] pl-1.5 text-[#c8c8c8]">
        <SearchIcon className="text-[#3f86d8]" />
        <input aria-label="搜索效果" defaultValue="色" className="w-full min-w-0 bg-transparent pl-1 text-[13px] outline-none" />
        <Svg w={9} h={9} box="0 0 9 9" className="mr-1"><path d="m1 1 7 7M8 1 1 8" strokeWidth="1.500" /></Svg>
      </label>
    </div>
    <div className="flex">
      <ul className={`min-w-0 flex-1 overflow-hidden border-r border-[#1b1b1b] text-[#a5a5a5] ${mono}`}>
        {presets.map((p) => (
          <li key={p.name} className="flex h-[17px] items-center border-b border-[#1f1f1f] pt-0.5 whitespace-nowrap">
            {p.level === 0 && (
              <span className="flex items-center pl-[5px] text-[11px] leading-4">
                <ChevronDown />
                <span className="w-3.5 pl-[3px]">*</span>
                {p.name}
              </span>
            )}
            {p.level === 1 && (
              <span className="flex items-center pl-[23px] text-[10px] leading-4">
                <ChevronDown />
                <span className="mr-1 ml-0.5"><FolderIcon /></span>
                {p.name}
              </span>
            )}
            {p.level === 2 && (
              <span className="flex items-center gap-1.5 pl-[51px] text-[11px] leading-4">
                <PresetIcon />
                {p.name}
              </span>
            )}
          </li>
        ))}
      </ul>
      <div className="w-[17px] bg-[#1c1c1c] px-px pt-0.5">
        <div className="h-[76px] rounded-full bg-[#303030]" />
      </div>
    </div>
    <div className="mr-[17px] flex h-[17px] justify-end border-t border-r border-black pt-0.5 pr-1.5">
      <Svg w={12} h={12} box="0 0 12 12"><path d="M0 0h12v12H6V6H0z" fill="#c0c0c0" stroke="none" /><path d="M1 7h4v4z" fill="#c0c0c0" stroke="none" /></Svg>
    </div>
  </section>
);

/* ---------- right column ---------- */

const alignIcons = [
  { label: "左对齐", d: "M1 0v16M3 2h7v4H3zM3 10h12v4H3z" },
  { label: "水平居中", d: "M8 0v16M4 2h8v4H4zM1 10h14v4H1z" },
  { label: "右对齐", d: "M15 0v16M6 2h7v4H6zM1 10h12v4H1z" },
  { label: "顶对齐", d: "M0 1h16M3 3h4v12H3zM10 3h4v7h-4z" },
  { label: "垂直居中", d: "M0 8h16M2 1h4v14H2zM9 4h4v8H9z" },
  { label: "底对齐", d: "M0 15h16M2 1h4v12H2zM10 6h4v7h-4z" },
];

const distributeIcons = [
  { label: "按顶分布", d: "M0 1h16M4 2h8v3H4zM0 10h16M3 11h10v3H3z" },
  { label: "按垂直居中分布", d: "M0 4h16M4 2h8v3H4zM0 12h16M3 10h10v4H3z" },
  { label: "按底分布", d: "M0 5h16M4 1h8v3H4zM0 15h16M3 10h10v4H3z" },
  { label: "按左分布", d: "M1 0v16M2 3h3v10H2zM10 0v16M11 5h4v6h-4z" },
  { label: "按水平居中分布", d: "M4 0v16M2 3h4v10H2zM12 0v16M10 4h4v8h-4z" },
  { label: "按右分布", d: "M6 0v16M2 3h3v10H2zM15 0v16M10 4h4v8h-4z" },
];

const AlignButtons = ({ items }: { items: typeof alignIcons }) => (
  <div className="flex justify-between pr-1 pl-1">
    {items.map((i) => (
      <button type="button" key={i.label} aria-label={i.label}>
        <Svg w={16} h={16}><path d={i.d} fill="currentColor" /></Svg>
      </button>
    ))}
  </div>
);

const SideColumn = () => (
  <aside className="w-[214px] shrink-0 bg-[#232323] pr-3 text-[13px] text-[#8f8f8f]">
    <h2 className="h-7 border-b-2 border-[#191919] pl-3 leading-[26px]">信息</h2>
    <h2 className="h-[30px] border-b-2 border-[#191919] pl-3 leading-7">音频</h2>
    <div className="flex h-[33px] items-center justify-between pr-2 pb-0.5 pl-3 text-[#b9b9b9]">
      <h2>对齐</h2>
      <MenuLines />
    </div>
    <div className="flex h-[18px] items-center pl-1.5">
      <span className="w-[87px] shrink-0 leading-4">将图层对齐到:</span>
      <Drop label="将图层对齐到" value="合成" className="h-[18px] w-[109px] border border-[#303030] bg-[#1f1f1f] text-[#b9b9b9]" />
    </div>
    <div className="h-[29px] border-b-2 border-[#2f2f2f] pt-[7px] pl-1.5 text-[#b5b5b5]">
      <AlignButtons items={alignIcons} />
    </div>
    <p className="h-[21px] pl-1.5 leading-[18px]">分布图层:</p>
    <div className="h-[33px] border-b-2 border-[#191919] pl-1.5 text-[#484848]">
      <AlignButtons items={distributeIcons} />
    </div>
    {["库", "字符", "段落", "跟踪器", "内容识别填充", "预览"].map((t) => (
      <h2 key={t} className="h-[30px] border-b-2 border-[#191919] pl-3 leading-7">{t}</h2>
    ))}
  </aside>
);

/* ---------- timeline ---------- */

type Prop = {
  kind: "group" | "shape" | "prop" | "expr" | "layer";
  name: string;
  open?: boolean;
  value?: string[];
  action?: string;
  add?: boolean;
  linked?: boolean;
  mark?: "target" | "selected" | "dim";
};

const rows: Prop[] = [
  { kind: "group", name: "内容", add: true },
  { kind: "group", name: "变换", open: true, action: "重置" },
  { kind: "prop", name: "锚点", value: ["-70.0,", "-76.0,", "0.0"] },
  { kind: "prop", name: "位置", value: ["960.0,", "540.0,", "0.0"], mark: "target" },
  { kind: "prop", name: "缩放", value: ["100.0,", "100.0,", "100.0%"], linked: true },
  { kind: "prop", name: "方向", value: ["0.0°,", "0.0°,", "0.0°"] },
  { kind: "prop", name: "X 轴旋转", value: ["0x+0.0°"] },
  { kind: "prop", name: "Y 轴旋转", value: ["0x+0.0°"] },
  { kind: "prop", name: "Z 轴旋转", value: ["0x+0.0°"] },
  { kind: "prop", name: "不透明度", value: ["100%"] },
  { kind: "group", name: "几何选项", action: "更改渲染器...", mark: "dim" },
  { kind: "group", name: "材质选项" },
  { kind: "layer", name: "形状图层 1" },
  { kind: "group", name: "内容", open: true, add: true },
  { kind: "shape", name: "椭圆 1" },
  { kind: "group", name: "变换", open: true, action: "重置" },
  { kind: "prop", name: "锚点", value: ["-70.0,", "-76.0,", "0.0"] },
  { kind: "prop", name: "位置", value: ["960.0,", "540.0,", "0.0"], open: true, mark: "selected" },
  { kind: "expr", name: "表达式: 位置" },
  { kind: "prop", name: "缩放", value: ["100.0,", "100.0,", "100.0%"], linked: true },
  { kind: "prop", name: "方向", value: ["0.0°,", "0.0°,", "0.0°"] },
  { kind: "prop", name: "X 轴旋转", value: ["0x+0.0°"] },
  { kind: "prop", name: "Y 轴旋转", value: ["0x+0.0°"] },
  { kind: "prop", name: "Z 轴旋转", value: ["0x+0.0°"] },
];

const rowHeight = (row: Prop, index: number) => {
  if (index === 0) return "h-[18px] pb-1";
  if (row.kind === "expr") return "h-9";
  return "h-5";
};

const LayerRow = ({ name }: { name: string }) => (
  <div className="flex h-5 shrink-0 items-center border-b border-[#1e1e1e] bg-[#4b4b4b] text-[#c8c8c8]">
    <span className="flex w-[31px] pl-[3px]"><FaEye size={12} /></span>
    <span className="size-[13px] bg-[#3c3c3c]" />
    <span className="ml-0.5 size-[13px] bg-[#3c3c3c]" />
    <span className="mr-[3px] ml-[11px]"><ChevronDown /></span>
    <span className="h-[17px] w-4 bg-[#6a82e6]" />
    <span className="w-[37px] pl-1.5 text-[11px] font-bold">2</span>
    <FaStar size={12} className="mr-[5px]" />
    <span className={`h-[18px] w-[183px] border-2 border-[#b9b9b9] pl-0.5 text-[11px] leading-[15px] font-bold ${mono}`}>{name}</span>
    <span className="ml-[5px] flex w-[43px] justify-between bg-[#333]"><ShyIcon /><SunIcon />
      <Svg w={12} h={12} box="0 0 12 12"><path d="M1 11 11 1" strokeWidth="1.500" /></Svg>
    </span>
    <span className="ml-8 size-[13px] bg-[#3c3c3c]" />
    <span className="mr-0.5 ml-0.5 size-[13px] bg-[#3c3c3c]" />
    <CubeIcon />
    <Drop label="模式" value="正常" className="ml-[18px] h-[18px] w-[69px] bg-[#1d1d1d]" />
    <span className="mx-[5px] size-[13px] bg-[#3a3a3a]" />
    <Drop label="轨道遮罩" value="无" className="h-[18px] w-[66px] bg-[#1d1d1d]" />
    <span className="flex w-[27px] justify-center"><Whip /></span>
    <Drop label="父级" value="无" className="h-[18px] w-[90px] bg-[#1d1d1d]" />
  </div>
);

const OutlineRow = ({ row, index }: { row: Prop; index: number }) => {
  if (row.kind === "layer") return <LayerRow name={row.name} />;

  return (
    <div className={`flex shrink-0 items-center border-b border-[#1e1e1e] text-[11px] leading-4 ${mono} ${rowHeight(row, index)}`}>
      {row.kind === "group" && (
        <div className={`flex w-[339px] items-center gap-3 pl-[89px] ${row.mark === "dim" ? "text-[#555]" : ""}`}>
          <span className="text-[#a5a5a5]">{row.open ? <ChevronDown /> : <ChevronRight />}</span>
          {row.name}
        </div>
      )}
      {row.kind === "shape" && (
        <div className="flex w-[339px] items-center pl-[3px]">
          <FaEye size={12} className="mr-[94px] text-[#d0d0d0]" />
          <ChevronRight />
          <span className="pl-[13px]">{row.name}</span>
        </div>
      )}
      {row.kind === "expr" && <div className="w-[347px] pl-[149px]">{row.name}</div>}
      {row.kind === "prop" && (
        <div className="flex w-[339px] items-center">
          <span className="flex w-[126px] justify-end pr-2 text-[#444]">{row.open ? <span className="text-[#a5a5a5]"><ChevronDown /></span> : "·"}</span>
          <Stopwatch />
          <span
            className={`ml-[3px] h-[19px] w-[193px] pl-1 leading-[18px] ${row.mark === "selected" ? "bg-[#4b4b4b]" : ""} ${
              row.mark === "target" ? "rounded-sm border border-[#a0a0a0] text-[#555]" : ""
            }`}
          >
            {row.name}
          </span>
        </div>
      )}
      <div className={`flex w-[316px] items-center ${row.mark === "selected" ? "text-[#b83430]" : "text-[#3c7cc4]"}`}>
        {row.linked && <span className="w-[18px]"><LinkIcon /></span>}
        {row.value?.map((v, i) => (
          <span key={i} className="w-[34px] pt-0.5 text-[10px] whitespace-nowrap">{v}</span>
        ))}
        {row.action && (
          <button type="button" className={row.mark === "dim" ? "pt-0.5" : "pt-0.5 font-bold text-[#3f8fe8]"}>{row.action}</button>
        )}
        {row.add && <span className="flex items-center gap-0.5 pl-[85px] text-[#a0a0a0]">添加:<PlayCircle /></span>}
        {row.kind === "shape" && (
          <Drop label="混合模式" value="正常" className="h-[18px] w-[127px] border border-[#2a2a2a] bg-[#1d1d1d] text-[#c8c8c8] [font-family:'Noto_Sans_CJK_SC',sans-serif]" />
        )}
        {row.kind === "expr" && (
          <span className="flex items-center gap-[5px] pb-5 pl-2.5 text-[#b9b9b9]">
            <Svg w={11} h={10} box="0 0 11 10" className="text-[#3f8fe8]"><path d="M1 3h9M1 7h9" strokeWidth="2" /></Svg>
            <Svg w={12} h={11} box="0 0 12 11"><path d="M1 0v10h11M2 7l2-3 2 2 2-3 2 2 2-2" /></Svg>
            <Whip className="text-[#3f8fe8]" />
            <PlayCircle />
          </span>
        )}
      </div>
      {row.kind === "prop" && <span className="pb-[5px] text-[#a5a5a5]"><Whip /></span>}
    </div>
  );
};

const HeaderSep = () => <span className="h-3 w-px shrink-0 bg-[#0d0d0d]" />;

const Outline = () => (
  <div className="flex w-[770px] shrink-0 flex-col">
    <div className="flex h-[37px] shrink-0 items-center text-[#b0b0b0]">
      <div className="w-[119px] shrink-0 pl-[7px]">
        <p className="pl-[13px] text-[15px] leading-4 font-bold text-[#3f8fe8] [font-family:'Open_Sans',sans-serif]">0:00:00:00</p>
        <p className={`text-[10px] leading-[14px] text-[#265488] ${mono}`}>00000 (25.00 fps)</p>
      </div>
      <label className="flex h-5 w-[449px] shrink-0 items-center border border-[#303030] bg-[#191919] pl-1.5">
        <SearchIcon />
        <input aria-label="搜索图层" className="w-full bg-transparent pl-1 text-[12px] outline-none" />
      </label>
      <Svg w={17} h={13} box="0 0 17 13" className="ml-4"><path d="M0 2h4M6 2h7M7 3v5h5" strokeWidth="1.500" /><path d="M3 0h4v4H3zM12 1h4v4h-4zM11 6h4v4h-4z" fill="currentColor" stroke="none" /><path d="M13 11h4l-2 2z" fill="currentColor" stroke="none" /></Svg>
      <span className="ml-4 flex w-[18px] items-end"><Svg w={7} h={16} box="0 0 7 16"><path d="M3.500 0v7M0 3.500h7M1 1l5 5M6 1 1 6" /></Svg><CubeIcon /></span>
      <span className="ml-[18px]"><ShyIcon /></span>
      <span className="ml-3"><FilmIcon /></span>
      <span className="ml-3"><BlurIcon /></span>
      <Svg w={16} h={16} className="ml-5"><path d="M.5 2.500h15v13H.5zM3 5c4 0 5 8 10 8M3 0v3M6 0v3M9 0v3M12 0v3" /></Svg>
    </div>
    <div className="flex h-5 shrink-0 items-center border-y border-black bg-[#303030] text-[13px] leading-4 text-[#b9b9b9]">
      <span className="flex w-[64px] shrink-0 items-center gap-1 pl-0.5">
        <FaEye size={11} /><FaVolumeUp size={12} />
        <span className="size-2 rounded-full bg-current" />
        <FaLock size={10} className="ml-0.5" />
      </span>
      <HeaderSep />
      <FaTag size={12} className="mr-1.5 ml-3.5 shrink-0" />
      <HeaderSep />
      <span className="w-8 shrink-0 pl-1.5 text-[11px]">#</span>
      <HeaderSep />
      <span className="w-[204px] shrink-0 pl-[7px]">源名称</span>
      <HeaderSep />
      <span className="flex w-[136px] shrink-0 items-center justify-between pr-[14px] pl-1">
        <ShyIcon /><SunIcon />
        <Svg w={11} h={11} box="0 0 11 11"><path d="m1 1 9 9" strokeWidth="1.500" strokeDasharray="3 1" /></Svg>
        <i className="text-[13px] [font-family:'Liberation_Serif',serif]">fx</i>
        <FilmIcon /><BlurIcon /><AdjustIcon /><CubeIcon />
      </span>
      <HeaderSep />
      <span className="w-[82px] pl-[7px]">模式</span>
      <span className="w-4 text-[11px] text-[#8f8f8f]">T</span>
      <span className="w-[66px] text-[12px] text-[#8f8f8f]">TrkMat</span>
      <HeaderSep />
      <span className="w-[116px] pl-[7px]">父级和链接</span>
      <HeaderSep />
    </div>
    <div className="relative flex min-h-0 flex-1 flex-col overflow-hidden text-[#a5a5a5]">
      {rows.map((row, i) => (
        <OutlineRow key={i} row={row} index={i} />
      ))}
      <svg className="pointer-events-none absolute top-16 left-40" width="250" height="312" viewBox="0 0 250 312">
        <defs>
          <linearGradient id="arrow" x1="0" y1="0" x2="0" y2="1">
            <stop offset="0.6" stopColor="#fb3b3b" />
            <stop offset="1" stopColor="#a87cc0" />
          </linearGradient>
        </defs>
        <path d="M12.500 16v13" stroke="#ddd" />
        <path d="M12 8 30 15 26 19 144 178 237 303 235 304 137 180 17 26 13 25z" fill="url(#arrow)" />
      </svg>
      <p className="pointer-events-none absolute top-[159px] left-[309px] text-[27px] leading-10 whitespace-nowrap text-[#fb3b3b]">
        将下层的位置【连接】到上层的位置上
      </p>
    </div>
  </div>
);

const seconds = ["00s", "01s", "02s", "03s", "04s", "05s", "06s", "07s", "08s", "09s", "10s"];

const Beam = () => (
  <span className="flex w-0 shrink-0 justify-center">
    <Svg w={8} h={14} box="0 0 8 14" className="text-[#a9bccf]"><path d="M.5 1.500h7M.5 12.500h7M4 1v12" strokeWidth="1.500" /></Svg>
  </span>
);

const TrackRow = ({ row, index }: { row: Prop; index: number }) => {
  if (row.kind === "layer") {
    return (
      <div className="flex h-5 shrink-0 border-b border-[#1b1b1b] bg-[#484a55] py-px">
        <div className="flex-1 border-t border-[#9fb0f0] bg-linear-to-b from-[#6c80d8] to-[#4f64cf]" />
      </div>
    );
  }
  return (
    <div className={`flex shrink-0 items-center border-b border-[#1e1e1e] bg-[#343433] ${rowHeight(row, index)}`}>
      {row.kind === "expr" ? (
        <div className={`mb-[5px] ml-1.5 flex h-8 flex-1 bg-[#1b1b1a] text-[12px] leading-[15px] ${mono}`}>
          <span className="w-[34px] pl-2 text-[#555]">1</span>
          <span className="w-[15px] bg-[#212121]" />
          <code className="h-[15px] bg-[#3d4f4f] text-[#c5d0c8] [font-family:'DejaVu_Sans_Mono',monospace]">transform.position</code>
        </div>
      ) : (
        <Beam />
      )}
    </div>
  );
};

const Graph = () => (
  <div className="relative flex min-w-0 flex-1 flex-col border-x border-black">
    <div className="mt-[7px] flex h-2.5 shrink-0 border-y border-black">
      <span className="w-[7px] rounded-l-full bg-[#3f86d8]" />
      <span className="flex-1 bg-[#696969]" />
      <span className="w-[7px] rounded-r-full bg-[#3f86d8]" />
    </div>
    <div className={`flex h-5 shrink-0 justify-between overflow-hidden px-[7px] text-[10px] leading-4 text-[#a0a0a0] ${mono}`}>
      {seconds.map((s, i) => (
        <span key={s} className={`flex w-0 flex-col ${i === 0 ? "items-start" : "items-center"}`}>
          {s}
          <span className="h-1 w-px shrink-0 bg-[#a0a0a0]" />
        </span>
      ))}
    </div>
    <div className="flex h-4 shrink-0 border-y border-black">
      <span className="w-[7px] rounded-l-md bg-[#3f86d8]" />
      <span className="flex-1 bg-[#636361]" />
      <span className="w-[7px] rounded-r-md bg-[#3f86d8]" />
    </div>
    <div className="h-1 shrink-0 border-b border-black" />
    <div className="min-h-0 flex-1 overflow-hidden bg-[#242424] px-[7px]">
      {rows.map((row, i) => (
        <TrackRow key={i} row={row} index={i} />
      ))}
    </div>
    <div className="pointer-events-none absolute top-[22px] bottom-0 left-0 flex w-3.5 flex-col items-center">
      <Svg w={13} h={15} box="0 0 13 15"><path d="M0 0h13v7l-6.500 8L0 7z" fill="#3f86d8" stroke="none" /><path d="M4 5h1M8 5h1" stroke="#16355c" /></Svg>
      <span className="w-px flex-1 bg-[#5c97d4]" />
    </div>
  </div>
);

const Timeline = () => (
  <section className="flex min-h-0 flex-1 flex-col bg-[#232323]">
    <div className="flex h-[25px] shrink-0 items-stretch pl-[25px] text-[13px] text-[#8f8f8f]">
      <button type="button" className="w-[106px] text-left">渲染队列</button>
      <button type="button" className="flex w-[114px] items-center gap-[11px]"><Swatch className="bg-[#ab9a78]" />合成1</button>
      <button type="button" className="flex w-[89px] items-center gap-[11px]"><Swatch className="bg-[#ab9a78]" />环形</button>
      <button type="button" className="flex items-center border-b-2 border-[#c8c8c8] text-left text-[#c8c8c8]">
        <span className="w-[15px] text-[10px]">×</span>
        <Swatch className="bg-[#ab9a78]" />
        <span className="mr-2.5 ml-[11px]">数字3</span>
        <MenuLines />
      </button>
    </div>
    <div className="flex min-h-0 flex-1">
      <Outline />
      <Graph />
      <div className="flex w-3.5 shrink-0 flex-col pt-[39px] text-[#b5b5b5]">
        <Svg w={13} h={14} box="0 0 13 14" className="ml-px"><path d="M0 0h13v9l-6.500 5L0 9z" fill="currentColor" stroke="none" /></Svg>
        <Svg w={14} h={13} box="0 0 14 13" className="mt-[7px]"><path d="M1 7 6 1v4M4 9l2-3 2 3-2 3z" strokeWidth="1.500" /><path d="M7 3h7v7H7z" fill="currentColor" stroke="none" /></Svg>
        <div className="mt-1 flex flex-1 flex-col bg-[#1b1b1b] pt-4 pb-[60px]">
          <div className="flex-1 rounded-full bg-[#333]" />
        </div>
      </div>
    </div>
    <footer className="flex h-3.5 shrink-0 items-center border-t border-black text-[#3f86d8]">
      <div className="flex w-[776px] items-center gap-[5px] pl-[3px]">
        <Svg w={12} h={12} box="0 0 12 12"><path d="M1 1h6v6H1zM3 3h6v6H3zM5 5h6v6H5z" /></Svg>
        <Svg w={12} h={12} box="0 0 12 12" className="ml-px"><circle cx="4.500" cy="4.500" r="3.800" /><path d="M5 5h6v6H5z" /></Svg>
        <Svg w={12} h={12} box="0 0 12 12" className="ml-px text-[#b0b0b0]"><path d="M4 0C2 0 3 5 .5 6 3 7 2 12 4 12M8 0c2 0 1 5 3.500 6C9 7 10 12 8 12" strokeWidth="1.500" /><path d="M4.500 0h3v12h-3z" fill="#777" stroke="none" /></Svg>
      </div>
      <Svg w={11} h={5} box="0 0 11 5"><path d="M0 5 3 2l1 1 2.500-3L11 5z" fill="#b0b0b0" stroke="none" /></Svg>
      <input
        type="range"
        aria-label="时间缩放"
        min={0}
        max={100}
        defaultValue={0}
        className="mx-[10px] h-[10px] w-[50px] appearance-none bg-linear-to-b from-transparent from-40% via-[#444] via-40% to-transparent to-60% [&::-webkit-slider-thumb]:size-[10px] [&::-webkit-slider-thumb]:appearance-none [&::-webkit-slider-thumb]:rounded-full [&::-webkit-slider-thumb]:border-2 [&::-webkit-slider-thumb]:border-[#a0a0a0] [&::-webkit-slider-thumb]:bg-[#232323]"
      />
      <Svg w={17} h={7} box="0 0 17 7"><path d="m0 7 4-5 1.500 1L4 7zM5 7l6-7 6 7z" fill="#b0b0b0" stroke="none" /></Svg>
    </footer>
  </section>
);

export default function App() {
  return (
    <div className="flex h-screen flex-col overflow-hidden bg-[#191919] [font-family:'Noto_Sans_CJK_SC',sans-serif]">
      <TitleBar />
      <Toolbar />
      <main className="flex min-h-0 flex-1 flex-col">
        <div className="flex shrink-0 gap-1">
          <ProjectPanel />
          <Viewer />
          <EffectsPanel />
          <SideColumn />
        </div>
        <div className="h-[5px] shrink-0 border-b border-[#6a8aa5] bg-[#101d2b]" />
        <Timeline />
      </main>
    </div>
  );
}
